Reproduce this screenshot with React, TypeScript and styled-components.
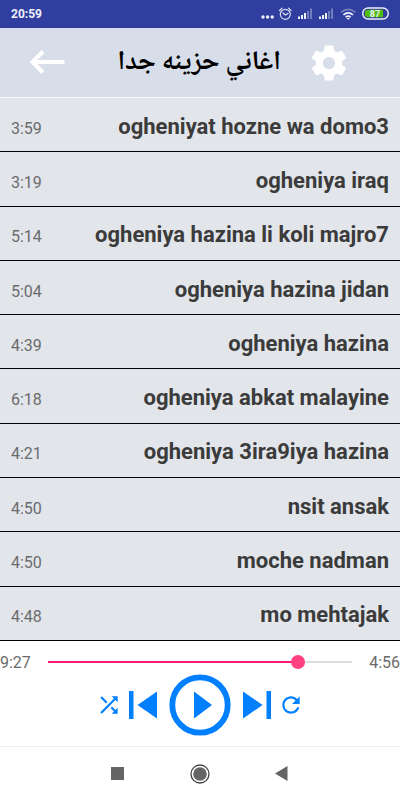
import React, { useState } from "react";
import styled, { createGlobalStyle } from "styled-components";

const GlobalStyle = createGlobalStyle`
  * { box-sizing: border-box; }
  body { margin: 0; background: #ffffff; font-family: Roboto, sans-serif; }
  button { border: 0; padding: 0; background: none; cursor: pointer; color: inherit; }
  svg { display: block; }
`;

const Screen = styled.div`
  min-height: 100vh;
  display: flex;
  flex-direction: column;
`;

const StatusBar = styled.div`
  height: 28px;
  padding: 0 10px 0 11px;
  display: flex;
  align-items: center;
  justify-content: space-between;
  background: #303f9f;
  color: #eef0fa;
  font-size: 12px;
  font-weight: 700;
`;

const StatusIcons = styled.div`
  display: flex;
  align-items: center;
`;

const Header = styled.header`
  height: 70px;
  padding: 0 50px 0 26px;
  display: flex;
  align-items: center;
  justify-content: space-between;
  background: #d8dee9;
  border-bottom: 1px solid #f3f5f9;
  color: #ffffff;
`;

const Title = styled.h1`
  flex: 1;
  margin: 0;
  padding: 0 27px;
  color: #000000;
  font-family: "Noto Naskh Arabic", "DejaVu Sans", serif;
  font-size: 27px;
  line-height: 32px;
  font-weight: 700;
  white-space: nowrap;
`;

const SongList = styled.ul`
  flex: 1;
  margin: 0;
  padding: 0;
  list-style: none;
  display: flex;
  flex-direction: column;
  background: #e2e5ea;
`;

const SongItem = styled.li`
  flex: 1 0 48px;
  display: flex;
  border-bottom: 1px solid #000000;
`;

const SongButton = styled.button`
  flex: 1;
  padding: 4px 11px 0;
  display: flex;
  align-items: center;
  justify-content: space-between;
  font-family: inherit;
`;

const Duration = styled.span`
  padding-top: 4px;
  color: #6b6c6e;
  font-size: 16px;
  line-height: 24px;
`;

const SongName = styled.span`
  color: #3b3b3b;
  font-size: 22px;
  line-height: 28px;
  font-weight: 700;
`;

const Player = styled.section`
  height: 105px;
  padding-top: 11px;
  background: #ffffff;
  color: #007fff;
`;

const SeekRow = styled.div`
  height: 20px;
  display: flex;
  align-items: center;
  justify-content: space-between;
`;

const Time = styled.span`
  width: 48px;
  padding-top: 2px;
  color: #6b6b6b;
  font-size: 16px;
  line-height: 20px;
  text-align: left;
`;

const TimeEnd = styled(Time)`
  text-align: right;
`;

const Seek = styled.input<{ $fill: number }>`
  flex: 1;
  min-width: 0;
  height: 14px;
  margin: 0;
  appearance: none;
  background: transparent;
  &::-webkit-slider-runnable-track {
    height: 2px;
    background: linear-gradient(to right, #ff1a79 ${(p) => p.$fill}%, #dcdcdc ${(p) => p.$fill}%);
  }
  &::-webkit-slider-thumb {
    appearance: none;
    width: 14px;
    height: 14px;
    margin-top: -6px;
    border-radius: 50%;
    background: #ff4081;
  }
`;

const Controls = styled.div`
  height: 66px;
  display: flex;
  align-items: center;
  justify-content: center;
`;

const ControlButton = styled.button<{ $width: number }>`
  width: ${(p) => p.$width}px;
  display: flex;
  justify-content: center;
`;

const NavBar = styled.nav`
  height: 54px;
  padding-right: 1px;
  display: flex;
  align-items: center;
  justify-content: center;
  gap: 58px;
  border-top: 1px solid #f0f0f0;
  background: #ffffff;
  color: #656565;
`;

const NavButton = styled.button`
  width: 24px;
  display: flex;
  justify-content: center;
`;

const songs = [
  { name: "ogheniyat hozne wa domo3", time: "3:59" },
  { name: "ogheniya iraq", time: "3:19" },
  { name: "ogheniya hazina li koli majro7", time: "5:14" },
  { name: "ogheniya hazina jidan", time: "5:04" },
  { name: "ogheniya hazina", time: "4:39" },
  { name: "ogheniya abkat malayine", time: "6:18" },
  { name: "ogheniya 3ira9iya hazina", time: "4:21" },
  { name: "nsit ansak", time: "4:50" },
  { name: "moche nadman", time: "4:50" },
  { name: "mo mehtajak", time: "4:48" },
];

const SystemIcons = () => (
  <svg width="130" height="20" viewBox="260 4 130 20" fill="#eef0fa" aria-hidden="true">
    <circle cx="263" cy="17" r="1.7" />
    <circle cx="267.6" cy="17" r="1.7" />
    <circle cx="272.2" cy="17" r="1.7" />
    <g fill="none" stroke="#d9dcf0" strokeWidth="1.2" strokeLinecap="round">
      <circle cx="285.3" cy="14.3" r="5" />
      <path d="M279.5 10.5l2.6-2.4M291.1 10.5l-2.6-2.4M283 13l2.3 2 2.6-1.6" />
    </g>
    {[298, 319].map((x) => (
      <g key={x}>
        <path d={`M${x} 16.5h2v2.5h-2zM${x + 3} 15h2v4h-2zM${x + 6} 13h2v6h-2z`} />
        <path opacity="0.35" d={`M${x + 9} 11h2v8h-2zM${x + 12} 8.5h2v10.5h-2z`} />
      </g>
    ))}
    <g fill="none" strokeWidth="1.7">
      <path stroke="#7780bf" d="M341 12.3q7.2-6 14.4 0" />
      <path stroke="#eef0fa" d="M343.4 14.8q4.8-4 9.6 0M345.6 17.1q2.6-2 5.2 0" />
    </g>
    <path d="M346.5 18h3.4l-1.7 2z" />
    <rect x="362.7" y="8" width="25.6" height="11" rx="5.5" fill="#303f9f" stroke="#eef0fa" strokeWidth="1.4" />
    <path d="M368.5 9.7H383v7.6h-14.5a3.8 3.8 0 0 1 0-7.6z" fill="#50be0a" />
    <text x="375" y="16.7" fontSize="9" fontWeight="700" textAnchor="middle" fontFamily="Roboto, sans-serif">
      87
    </text>
  </svg>
);

export default function App() {
  const [position, setPosition] = useState(838);
  const fill = (7 + (position / 1000) * 290) / 3.04;

  return (
    <>
      <GlobalStyle />
      <Screen>
        <StatusBar>
          <span>20:59</span>
          <StatusIcons>
            <SystemIcons />
          </StatusIcons>
        </StatusBar>
        <Header>
          <button type="button" aria-label="Back">
            <svg width="42" height="32" viewBox="0 0 42 32" fill="none" stroke="currentColor" strokeWidth="4">
              <path d="M38.5 15H7M17 4.5L6.5 15 17 25.5" />
            </svg>
          </button>
          <Title lang="ar" dir="rtl">اغاني حزينه جدا</Title>
          <button type="button" aria-label="Settings">
            <svg width="42" height="42" viewBox="0 0 24 24" fill="currentColor">
              <path d="M19.43 12.98c.04-.32.07-.64.07-.98s-.03-.66-.07-.98l2.11-1.65c.19-.15.24-.42.12-.64l-2-3.46c-.12-.22-.39-.3-.61-.22l-2.49 1c-.52-.4-1.08-.73-1.69-.98l-.38-2.65C14.46 2.18 14.25 2 14 2h-4c-.25 0-.46.18-.49.42l-.38 2.65c-.61.25-1.17.59-1.69.98l-2.49-1c-.23-.09-.49 0-.61.22l-2 3.46c-.13.22-.07.49.12.64l2.11 1.65c-.04.32-.07.65-.07.98s.03.66.07.98l-2.11 1.65c-.19.15-.24.42-.12.64l2 3.46c.12.22.39.3.61.22l2.49-1c.52.4 1.08.73 1.69.98l.38 2.65c.03.24.24.42.49.42h4c.25 0 .46-.18.49-.42l.38-2.65c.61-.25 1.17-.59 1.69-.98l2.49 1c.23.09.49 0 .61-.22l2-3.46c.12-.22.07-.49-.12-.64l-2.11-1.65zM12 15.5c-1.93 0-3.5-1.57-3.5-3.5s1.57-3.5 3.5-3.5 3.5 1.57 3.5 3.5-1.57 3.5-3.5 3.5z" />
            </svg>
          </button>
        </Header>
        <SongList>
          {songs.map((song) => (
            <SongItem key={song.name}>
              <SongButton type="button">
                <Duration>{song.time}</Duration>
                <SongName>{song.name}</SongName>
              </SongButton>
            </SongItem>
          ))}
        </SongList>
        <Player>
          <SeekRow>
            <Time>9:27</Time>
            <Seek
              type="range"
              aria-label="Seek"
              min={0}
              max={1000}
              value={position}
              $fill={fill}
              onChange={(e) => setPosition(Number(e.target.value))}
            />
            <TimeEnd>4:56</TimeEnd>
          </SeekRow>
          <Controls>
            <ControlButton type="button" aria-label="Shuffle" $width={26}>
              <svg width="26" height="26" viewBox="0 0 24 24" fill="currentColor">
                <path d="M10.59 9.17L5.41 4 4 5.41l5.17 5.17 1.42-1.41zM14.5 4l2.04 2.04L4 18.59 5.41 20 17.96 7.46 20 9.5V4h-5.5zm.33 9.41l-1.41 1.41 3.13 3.13L14.5 20H20v-5.5l-2.04 2.04-3.13-3.13z" />
              </svg>
            </ControlButton>
            <ControlButton type="button" aria-label="Previous" $width={42}>
              <svg width="28" height="28" viewBox="0 0 28 28" fill="currentColor">
                <path d="M0 0h4.5v28H0zM28 .5v27L8.5 14z" />
              </svg>
            </ControlButton>
            <ControlButton type="button" aria-label="Play" $width={72}>
              <svg width="62" height="62" viewBox="0 0 62 62" fill="currentColor">
                <circle cx="31" cy="31" r="27.7" fill="none" stroke="currentColor" strokeWidth="5.8" />
                <path d="M25 17.5v27L43 31z" />
              </svg>
            </ControlButton>
            <ControlButton type="button" aria-label="Next" $width={42}>
              <svg width="28" height="28" viewBox="0 0 28 28" fill="currentColor">
                <path d="M0 .5v27L19.5 14zM23.5 0H28v28h-4.5z" />
              </svg>
            </ControlButton>
            <ControlButton type="button" aria-label="Repeat" $width={26}>
              <svg width="26" height="26" viewBox="0 0 24 24" fill="currentColor">
                <path d="M17.65 6.35C16.2 4.9 14.21 4 12 4c-4.42 0-7.99 3.58-7.99 8s3.57 8 7.99 8c3.73 0 6.84-2.55 7.73-6h-2.08c-.82 2.33-3.04 4-5.65 4-3.31 0-6-2.69-6-6s2.69-6 6-6c1.66 0 3.14.69 4.22 1.78L13 11h7V4l-2.35 2.35z" />
              </svg>
            </ControlButton>
          </Controls>
        </Player>
        <NavBar aria-label="System">
          <NavButton type="button" aria-label="Recent apps">
            <svg width="13" height="13" viewBox="0 0 13 13" fill="currentColor">
              <path d="M0 0h13v13H0z" />
            </svg>
          </NavButton>
          <NavButton type="button" aria-label="Home">
            <svg width="20" height="20" viewBox="0 0 20 20" fill="currentColor">
              <circle cx="10" cy="10" r="9" fill="none" stroke="#444444" strokeWidth="1.3" />
              <circle cx="10" cy="10" r="6.8" />
            </svg>
          </NavButton>
          <NavButton type="button" aria-label="System back">
            <svg width="13" height="15" viewBox="0 0 13 15" fill="currentColor">
              <path d="M12.5 0v15L0 7.5z" />
            </svg>
          </NavButton>
        </NavBar>
      </Screen>
    </>
  );
}
